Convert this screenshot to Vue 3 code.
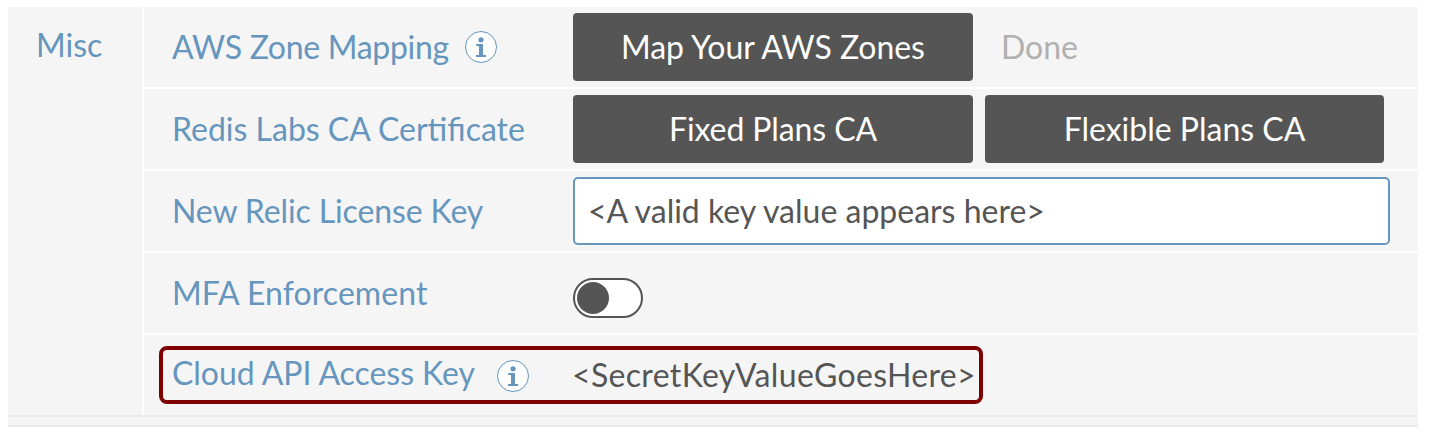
<script setup>
</script>

<template>
  <main class="page">
    <section class="panel">
      <div class="group"><span class="text group-name">Misc</span></div>
      <div class="rows">
        <div class="row">
          <div class="label">
            <span class="text l-zone">AWS Zone Mapping</span>
            <svg class="info" viewBox="0 0 32 32">
              <circle cx="16" cy="16" r="15.5" fill="#fff" stroke="#6695bd" />
              <circle cx="16" cy="8.8" r="2.6" fill="#6695bd" />
              <path d="M11.2 13H18V24H21V26H11V24H14V15H11.2Z" fill="#6695bd" />
            </svg>
          </div>
          <button class="btn"><span class="text b-map">Map Your AWS Zones</span></button>
          <span class="text done">Done</span>
        </div>
        <div class="row">
          <div class="label"><span class="text l-cert">Redis Labs CA Certificate</span></div>
          <button class="btn"><span class="text b-fixed">Fixed Plans CA</span></button>
          <button class="btn last"><span class="text b-flex">Flexible Plans CA</span></button>
        </div>
        <div class="row">
          <div class="label"><span class="text l-relic">New Relic License Key</span></div>
          <div class="field"><span class="text v-key">&lt;A valid key value appears here&gt;</span></div>
        </div>
        <div class="row">
          <div class="label"><span class="text l-mfa">MFA Enforcement</span></div>
          <div class="toggle"><div class="knob"></div></div>
        </div>
        <div class="row">
          <div class="highlight">
            <div class="label access">
              <span class="text l-cloud">Cloud API Access Key</span>
              <svg class="info" viewBox="0 0 32 32">
                <circle cx="16" cy="16" r="15.5" fill="#fff" stroke="#6695bd" />
                <circle cx="16" cy="8.8" r="2.6" fill="#6695bd" />
                <path d="M11.2 13H18V24H21V26H11V24H14V15H11.2Z" fill="#6695bd" />
              </svg>
            </div>
            <span class="text secret">&lt;SecretKeyValueGoesHere&gt;</span>
          </div>
        </div>
      </div>
    </section>
    <div class="footer"></div>
  </main>
</template>

<style>
body { margin: 0; background: #fff; }
</style>

<style scoped>
.page {
  box-sizing: border-box;
  width: 1429px;
  height: 439px;
  padding: 7px 11px 0 8px;
  overflow: hidden;
  font-family: Lato, sans-serif;
  font-size: 32px;
  line-height: 40px;
  color: #555;
}
.text { white-space: nowrap; }
.l-zone { letter-spacing: -0.29px; }
.l-relic { letter-spacing: -0.12px; }
.l-mfa { letter-spacing: 0.07px; }
.l-cloud { letter-spacing: -0.05px; }
.b-map { letter-spacing: -0.04px; }
.b-fixed { letter-spacing: -0.1px; }
.secret { margin-left: -1px; letter-spacing: 0.34px; }
.panel { display: flex; gap: 2px; height: 408px; }
.group {
  width: 134px;
  box-sizing: border-box;
  padding: 18px 0 0 28px;
  background: #f5f5f5;
  color: #6695bd;
}
.rows { flex: 1; display: flex; flex-direction: column; gap: 2px; }
.row {
  box-sizing: border-box;
  height: 80px;
  padding-left: 28px;
  display: flex;
  align-items: center;
  background: #f5f5f5;
}
.label {
  width: 401px;
  flex: none;
  display: flex;
  align-items: center;
  color: #6695bd;
}
.info { width: 32px; height: 32px; margin-left: 16px; flex: none; }
.btn {
  width: 400px;
  height: 68px;
  padding: 0;
  margin: 0 12px 0 0;
  border: 0;
  border-radius: 4px;
  background: #555;
  color: #fff;
  font: inherit;
}
.btn.last { width: 399px; margin: 0; }
.done { margin-left: 16px; color: #b0b0b0; }
.field {
  box-sizing: border-box;
  width: 817px;
  height: 68px;
  padding-left: 13px;
  display: flex;
  align-items: center;
  border: 2px solid #6695bd;
  border-radius: 5px;
  background: #fff;
}
.toggle {
  box-sizing: border-box;
  width: 70px;
  height: 40px;
  margin-top: 10px;
  padding: 2px;
  border: 2px solid #555;
  border-radius: 20px;
  background: #fff;
}
.knob { width: 32px; height: 32px; border-radius: 50%; background: #555; }
.highlight {
  box-sizing: border-box;
  width: 824px;
  height: 58px;
  margin-left: -13px;
  padding-left: 9px;
  display: flex;
  align-items: center;
  border: 4px solid #7e0000;
  border-radius: 8px;
}
.access .text { margin-top: -4px; }
.access .info { margin: 1px 0 0 22px; }
.footer {
  height: 8px;
  border-top: 2px solid #e9e9e9;
  border-bottom: 2px solid #e9e9e9;
  background: #f5f5f5;
}
</style>
